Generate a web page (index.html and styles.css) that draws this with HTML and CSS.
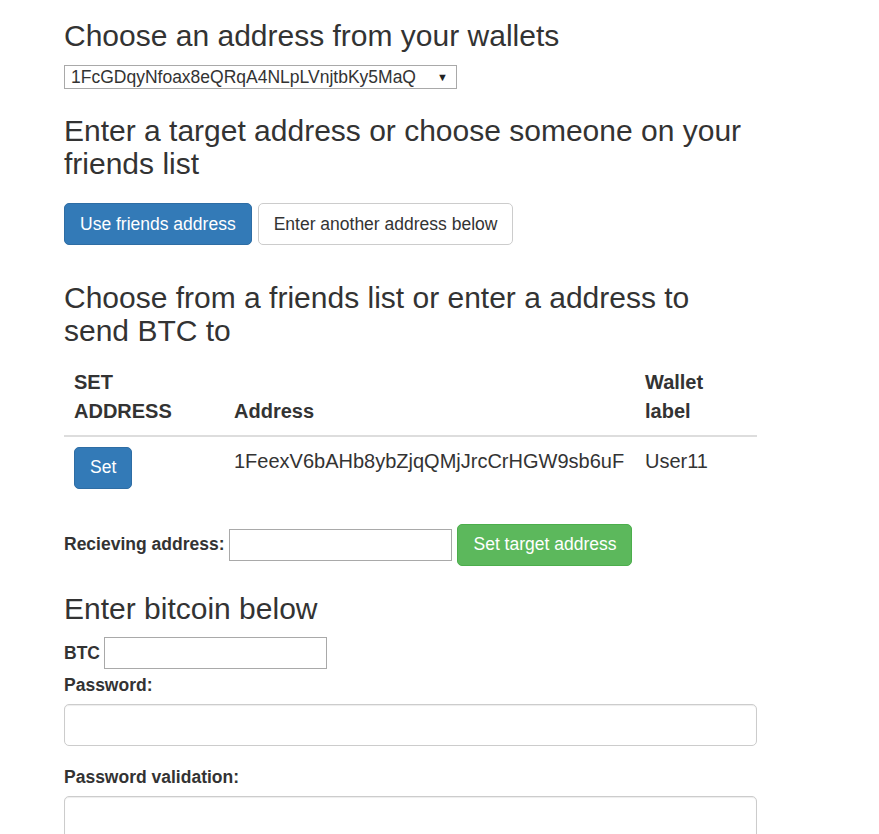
FILE: index.html
```html
<!DOCTYPE html>
<html lang="en">
<head>
<meta charset="utf-8">
<title>Send BTC</title>
<link rel="stylesheet" href="styles.css">
</head>
<body>
<div class="container">
  <h3 class="heading heading-first">Choose an address from your wallets</h3>
  <div class="select-wrap">
    <select class="wallet-select">
      <option>1FcGDqyNfoax8eQRqA4NLpLVnjtbKy5MaQ</option>
    </select>
  </div>

  <h3 class="heading heading-target">Enter a target address or choose someone on your friends list</h3>
  <div class="btn-row">
    <button class="btn btn-primary">Use friends address</button>
    <button class="btn btn-default">Enter another address below</button>
  </div>

  <h3 class="heading heading-friends">Choose from a friends list or enter a address to send BTC to</h3>
  <table class="table">
    <colgroup>
      <col class="col-set">
      <col class="col-address">
      <col class="col-label">
    </colgroup>
    <thead>
      <tr>
        <th>SET ADDRESS</th>
        <th>Address</th>
        <th>Wallet label</th>
      </tr>
    </thead>
    <tbody>
      <tr>
        <td><button class="btn btn-primary btn-set">Set</button></td>
        <td>1FeexV6bAHb8ybZjqQMjJrcCrHGW9sb6uF</td>
        <td>User11</td>
      </tr>
    </tbody>
  </table>

  <div class="inline-form">
    <label class="label">Recieving address:</label>
    <input class="plain-input" type="text">
    <button class="btn btn-success">Set target address</button>
  </div>

  <h3 class="heading heading-btc">Enter bitcoin below</h3>
  <div class="inline-form btc-row">
    <label class="label">BTC</label>
    <input class="plain-input" type="text">
  </div>

  <div class="form-group first-group">
    <label class="label block-label">Password:</label>
    <input class="form-control" type="password">
  </div>
  <div class="form-group">
    <label class="label block-label">Password validation:</label>
    <input class="form-control" type="password">
  </div>
</div>
</body>
</html>
```

FILE: styles.css
```css
html, body {
  margin: 0;
  padding: 0;
  background: #fff;
}

body {
  font-family: "Liberation Sans", Arial, Helvetica, sans-serif;
  font-size: 17.5px;
  line-height: 1.42857;
  color: #333;
}

.container {
  padding-left: 64px;
  width: 693px;
}

.heading {
  font-size: 30px;
  font-weight: 500;
  line-height: 1.1;
  margin: 0 0 12.5px 0;
  color: #333;
}

.heading-first { margin-top: 19px; }
.heading-target { margin-top: 24.5px; }
.heading-friends { margin-top: 35.5px; }
.heading-btc { margin-top: 26px; }

/* select */
.select-wrap {
  position: relative;
  display: inline-block;
  vertical-align: top;
}

.select-wrap::after {
  content: "\25BC";
  position: absolute;
  right: 9px;
  top: 5px;
  font-size: 11px;
  line-height: 14px;
  color: #222;
  pointer-events: none;
}

.wallet-select {
  display: block;
  -webkit-appearance: none;
  appearance: none;
  width: 393px;
  height: 24px;
  margin: 0;
  padding: 0 0 0 6px;
  border: 1px solid #a9a9a9;
  border-radius: 0;
  background: #fff;
  font-family: "Liberation Sans", Arial, sans-serif;
  font-size: 17.5px;
  color: #333;
}

/* buttons */
.btn-row {
  display: flex;
  gap: 6px;
  margin-top: 23.5px;
}

.btn {
  display: inline-block;
  font-family: "Liberation Sans", Arial, sans-serif;
  font-size: 17.5px;
  line-height: 25px;
  padding: 7.5px 15px;
  border: 1px solid transparent;
  border-radius: 5px;
  cursor: pointer;
  white-space: nowrap;
  margin: 0;
}

.btn-primary {
  color: #fff;
  background-color: #337ab7;
  border-color: #2e6da4;
}

.btn-default {
  color: #333;
  background-color: #fff;
  border-color: #ccc;
}

.btn-success {
  color: #fff;
  background-color: #5cb85c;
  border-color: #4cae4c;
}

/* table */
.table {
  width: 693px;
  table-layout: fixed;
  border-collapse: collapse;
  border-spacing: 0;
  margin: 0 0 25px 0;
  font-size: 20px;
  line-height: 1.42857;
}

.col-set { width: 160px; }
.col-address { width: 411px; }
.col-label { width: 122px; }

.table th {
  text-align: left;
  font-weight: bold;
  vertical-align: bottom;
  padding: 9px 10px;
  border-bottom: 2.5px solid #ddd;
}

.table td {
  vertical-align: top;
  padding: 10px 10px;
}

.btn-set {
  font-size: 17.5px;
}

/* inline form rows */
.inline-form {
  display: flex;
  align-items: center;
  gap: 5px;
}

.label {
  font-weight: bold;
  font-size: 17.5px;
  line-height: 25px;
}

.plain-input {
  box-sizing: border-box;
  width: 223px;
  height: 32px;
  margin: 0;
  padding: 1px 3px;
  border: 1px solid #a9a9a9;
  border-radius: 0;
  font-family: "Liberation Sans", Arial, sans-serif;
  font-size: 17.5px;
  background: #fff;
}

.btc-row {
  margin-top: 2px;
  gap: 4px;
}

/* form groups */
.form-group {
  margin-bottom: 18.75px;
}

.first-group {
  margin-top: 3.5px;
}

.block-label {
  display: inline-block;
  margin-bottom: 6.25px;
}

.form-control {
  display: block;
  box-sizing: border-box;
  width: 693px;
  height: 42.5px;
  padding: 7.5px 15px;
  margin: 0;
  font-family: "Liberation Sans", Arial, sans-serif;
  font-size: 17.5px;
  color: #555;
  background-color: #fff;
  border: 1px solid #ccc;
  border-radius: 5px;
  box-shadow: inset 0 1px 1px rgba(0, 0, 0, 0.075);
}
```
